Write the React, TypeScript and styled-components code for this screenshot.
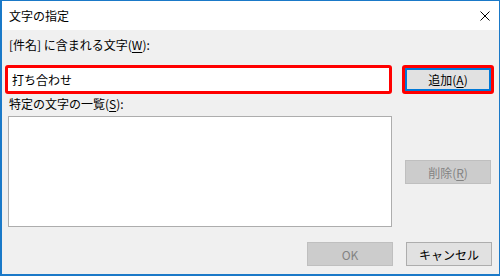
import React from 'react';
import styled, { createGlobalStyle } from 'styled-components';

const GlobalStyle = createGlobalStyle`
    html, body {
        margin: 0;
        padding: 0;
        background: #ffffff;
    }
    * {
        box-sizing: border-box;
    }
`;

const Window = styled.div`
    width: 500px;
    height: 276px;
    display: flex;
    flex-direction: column;
    background: #f0f0f0;
    border-top: 1px solid #1a79c8;
    border-right: 1px solid #1a79c8;
    border-left: 2px solid #1a79c8;
    border-bottom: 2px solid #1a79c8;
    font-family: "Noto Sans CJK JP", "Noto Sans", sans-serif;
    font-size: 12px;
    color: #000000;
`;

const TitleBar = styled.div`
    height: 29px;
    flex-shrink: 0;
    display: flex;
    align-items: center;
    justify-content: space-between;
    background: #ffffff;
    padding: 0 9px 0 7px;
`;

const Title = styled.div`
    line-height: 16px;
`;

const CloseIcon = styled.svg`
    width: 10px;
    height: 10px;
    display: block;
`;

const Body = styled.div`
    display: grid;
    grid-template-columns: 387px 92px;
    column-gap: 10px;
    padding: 7px 0 0 3px;
`;

const Label = styled.div<{ $top?: number }>`
    grid-column: 1;
    padding-left: 4px;
    line-height: 16px;
    margin-top: ${p => p.$top ?? 0}px;
`;

const Key = styled.span`
    text-decoration: underline;
    text-underline-offset: 2px;
`;

const RedFrame = styled.div`
    height: 29px;
    border: 3px solid #ff0000;
    border-radius: 3px;
`;

const InputFrame = styled(RedFrame)`
    grid-column: 1;
    margin-top: 12px;
`;

const AddFrame = styled(RedFrame)`
    grid-column: 2;
    margin-top: 12px;
`;

const TextField = styled.div`
    height: 100%;
    background: #ffffff;
    padding-left: 4px;
    display: flex;
    align-items: center;
`;

const Button = styled.div<{ $disabled?: boolean; $default?: boolean }>`
    width: 86px;
    height: 24px;
    display: flex;
    align-items: center;
    justify-content: center;
    background: ${p => (p.$disabled ? '#cccccc' : '#e1e1e1')};
    border: ${p => (p.$default ? '2px solid #0078d7' : p.$disabled ? '1px solid #bfbfbf' : '1px solid #adadad')};
    color: ${p => (p.$disabled ? '#838383' : '#000000')};
`;

const AddButton = styled(Button)`
    width: 100%;
    height: 100%;
`;

const ListBox = styled.div`
    grid-column: 1;
    margin: 4px 0 0 3px;
    height: 111px;
    background: #ffffff;
    border: 1px solid #adadad;
`;

const SideColumn = styled.div`
    grid-column: 2;
    padding: 48px 0 0 3px;
`;

const Footer = styled.div`
    display: flex;
    justify-content: flex-end;
    gap: 13px;
    padding: 15px 7px 0 0;
`;

export default function App() {
    return (
        <>
            <GlobalStyle />
            <Window>
                <TitleBar>
                    <Title>文字の指定</Title>
                    <CloseIcon viewBox="0 0 10 10">
                        <path d="M0.5 0.5 L9.5 9.5 M9.5 0.5 L0.5 9.5" stroke="#000" strokeWidth="1" fill="none" />
                    </CloseIcon>
                </TitleBar>
                <Body>
                    <Label>[件名] に含まれる文字(<Key>W</Key>):</Label>
                    <div />
                    <InputFrame>
                        <TextField>打ち合わせ</TextField>
                    </InputFrame>
                    <AddFrame>
                        <AddButton $default>追加(<Key>A</Key>)</AddButton>
                    </AddFrame>
                    <Label $top={2}>特定の文字の一覧(<Key>S</Key>):</Label>
                    <div />
                    <ListBox />
                    <SideColumn>
                        <Button $disabled>削除(<Key>R</Key>)</Button>
                    </SideColumn>
                </Body>
                <Footer>
                    <Button $disabled>OK</Button>
                    <Button>キャンセル</Button>
                </Footer>
            </Window>
        </>
    );
}
